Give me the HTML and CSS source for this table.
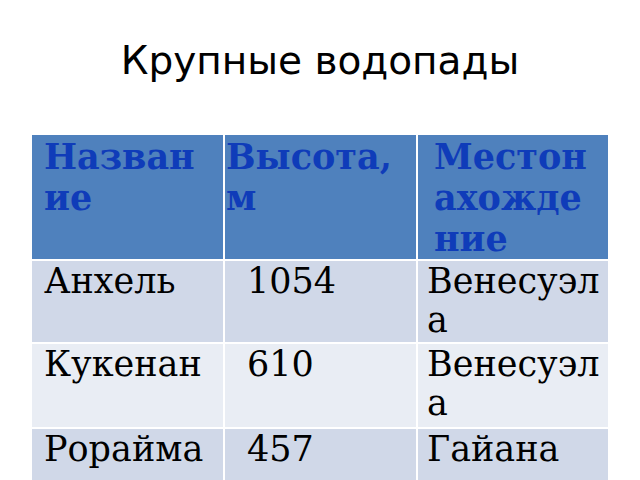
FILE: index.html
```html
<!DOCTYPE html>
<html lang="ru">
<head>
<meta charset="utf-8">
<title>Крупные водопады</title>
<link rel="stylesheet" href="styles.css">
</head>
<body>
<h1 class="title">Крупные водопады</h1>
<div class="table">
  <div class="cell head c1">Назван<br>ие</div>
  <div class="cell head c2">Высота,<br>м</div>
  <div class="cell head c3">Местон<br>ахожде<br>ние</div>

  <div class="cell odd c1">Анхель</div>
  <div class="cell odd c2 num">1054</div>
  <div class="cell odd c3">Венесуэл<br>а</div>

  <div class="cell even c1">Кукенан</div>
  <div class="cell even c2 num">610</div>
  <div class="cell even c3">Венесуэл<br>а</div>

  <div class="cell odd c1">Рорайма</div>
  <div class="cell odd c2 num">457</div>
  <div class="cell odd c3">Гайана</div>
</div>
</body>
</html>
```

FILE: styles.css
```css
html, body {
  margin: 0;
  padding: 0;
  background: #ffffff;
  overflow: hidden;
}

body {
  width: 640px;
  height: 480px;
}

.title {
  margin: 38px 0 0 0;
  font-family: "DejaVu Sans", sans-serif;
  font-weight: normal;
  font-size: 39px;
  line-height: 46px;
  color: #000000;
  text-align: center;
}

.table {
  margin: 51px 0 0 32px;
  width: 576px;
  display: grid;
  grid-template-columns: 191px 191px 190px;
  grid-template-rows: 124px 81px 83px 82px;
  gap: 2px;
  background: #ffffff;
}

.cell {
  font-family: "DejaVu Serif", serif;
  white-space: nowrap;
  overflow: visible;
  box-sizing: border-box;
}

.head {
  background: #4f81bd;
  color: #0f3cb9;
  font-weight: bold;
  font-size: 35px;
  line-height: 41px;
  padding-top: 1px;
}

.odd, .even {
  color: #000000;
  font-size: 35px;
  line-height: 39px;
  padding-top: 1px;
}

.odd { background: #d0d8e8; }
.even { background: #e9edf4; }

.c1 { padding-left: 12px; }
.head.c2 { padding-left: 1px; }
.c2.num { padding-left: 22px; }
.head.c3 { padding-left: 16px; }
.odd.c3, .even.c3 { padding-left: 9px; }
```
